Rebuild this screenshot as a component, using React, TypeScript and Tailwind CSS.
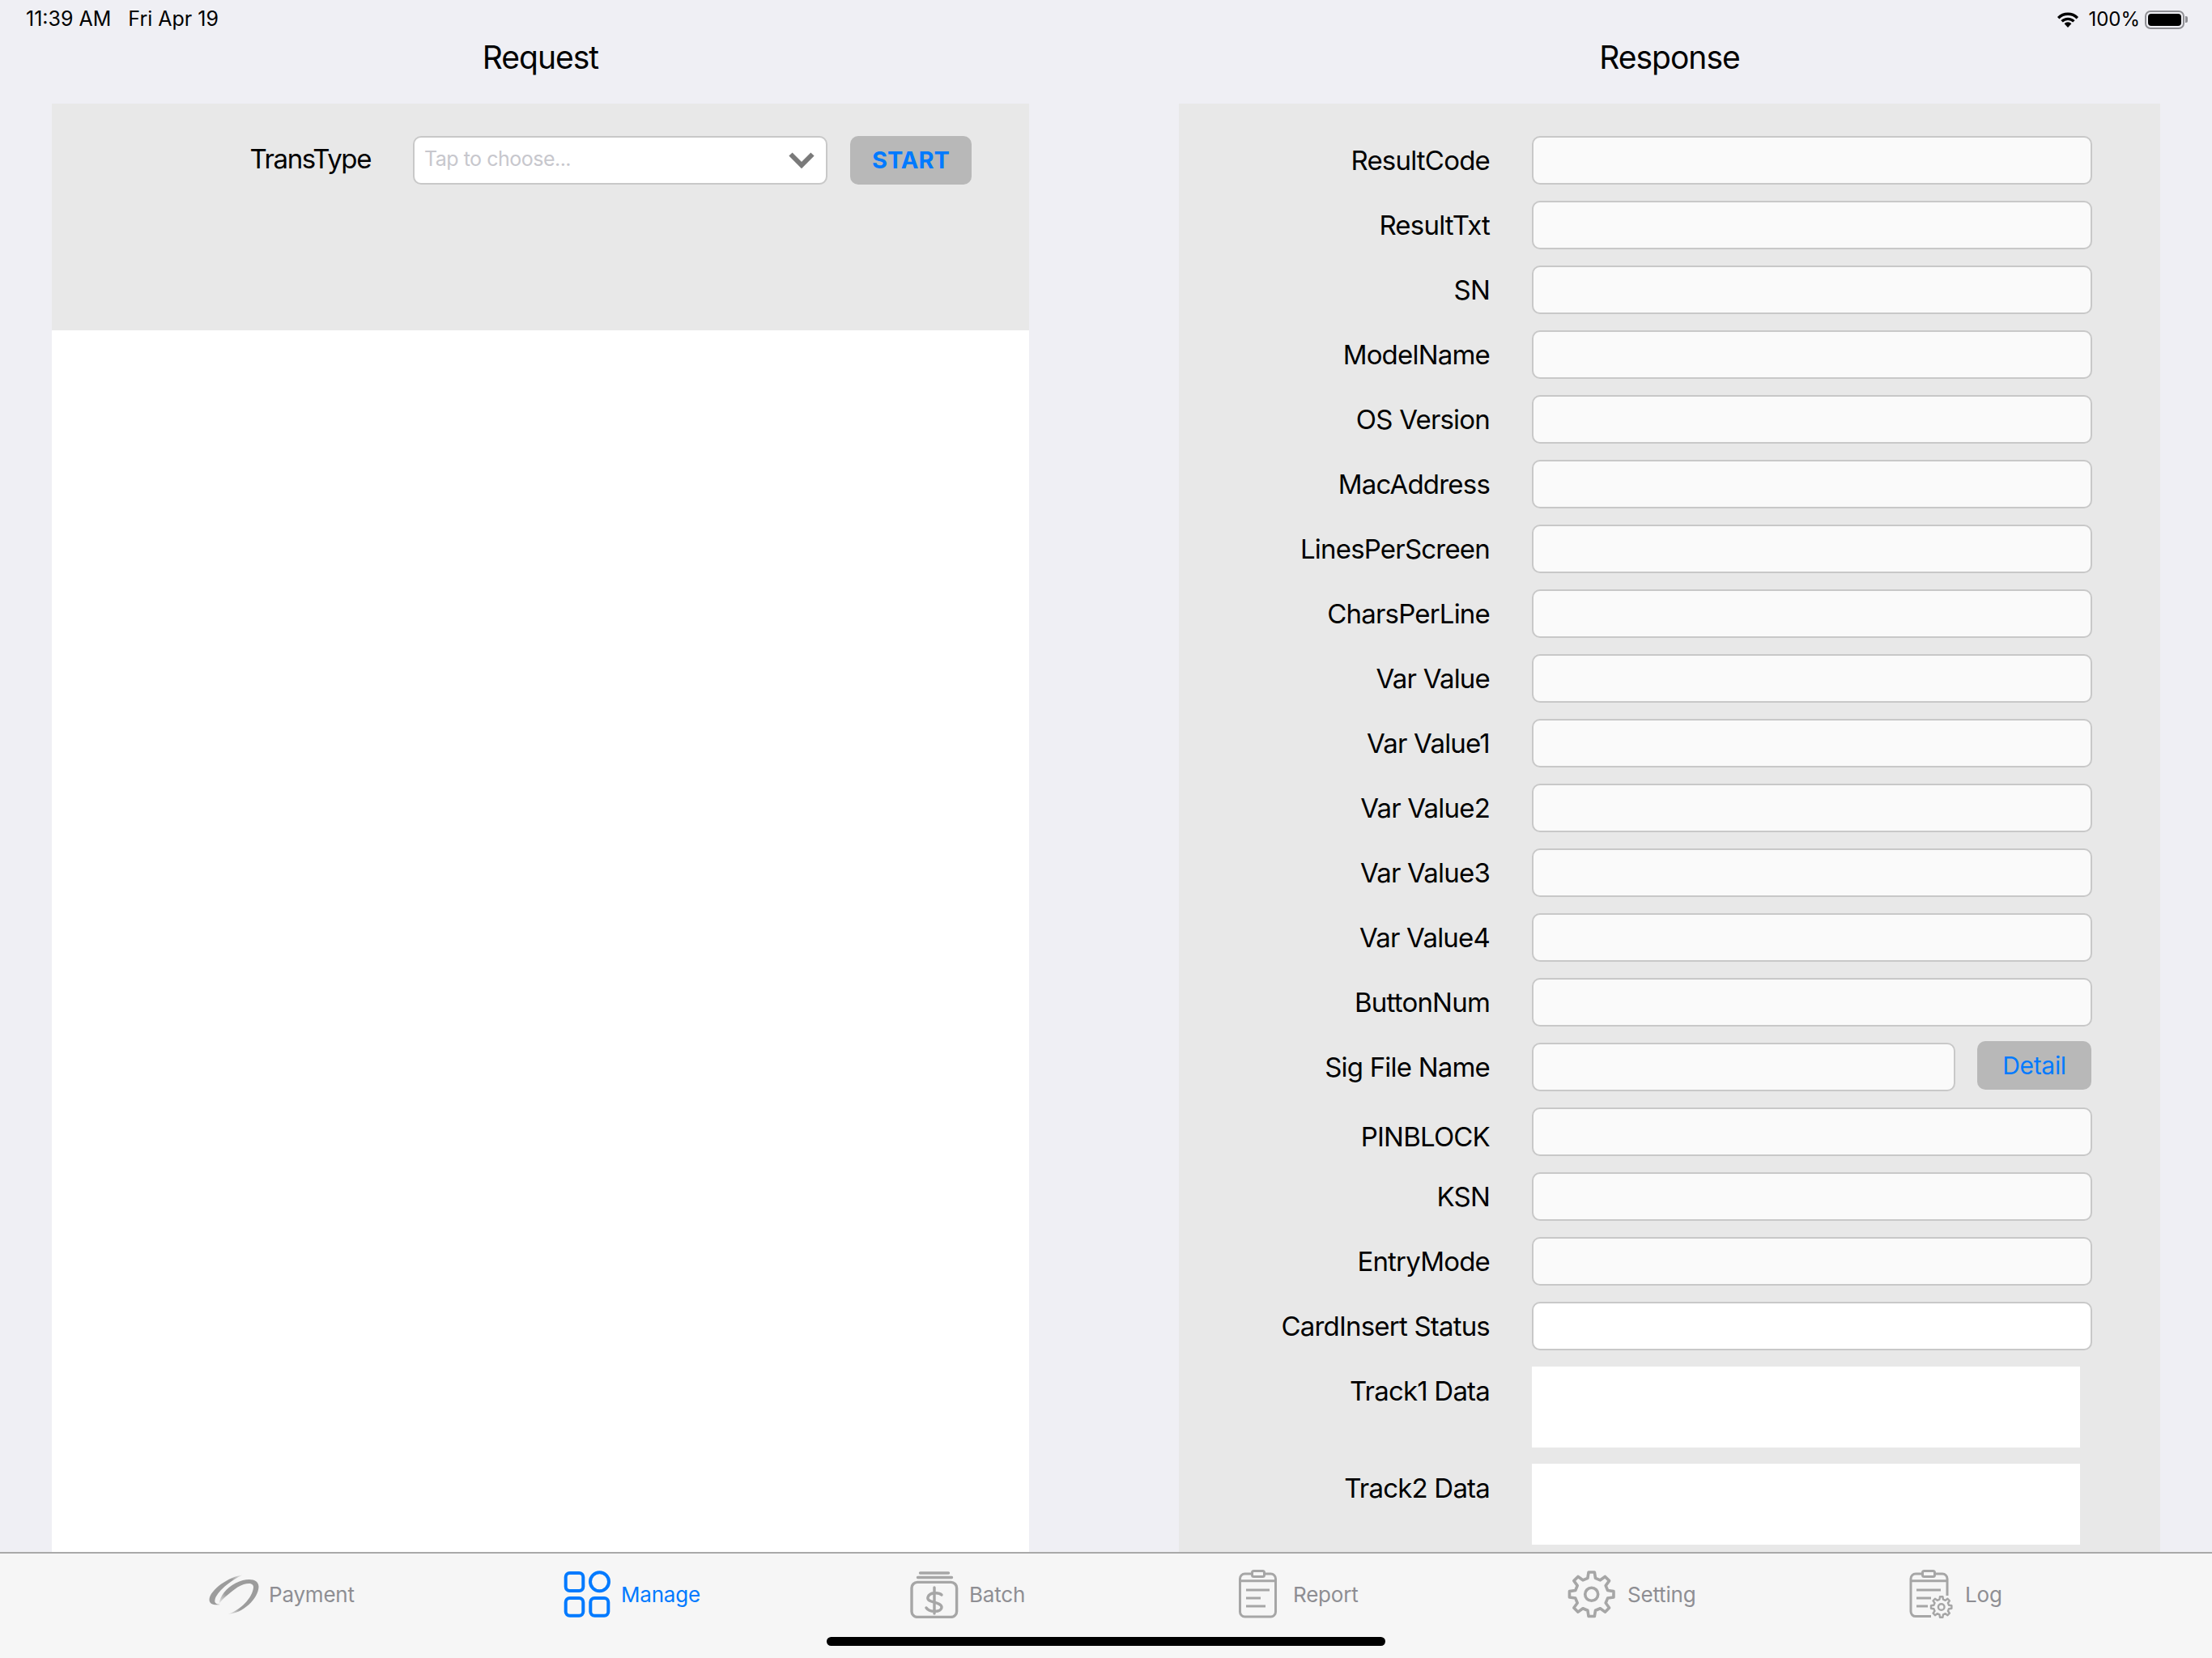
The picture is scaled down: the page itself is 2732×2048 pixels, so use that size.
import React from "react";

const font = "font-['Inter','Liberation_Sans',sans-serif]";

const fields = [
  "ResultCode",
  "ResultTxt",
  "SN",
  "ModelName",
  "OS Version",
  "MacAddress",
  "LinesPerScreen",
  "CharsPerLine",
  "Var Value",
  "Var Value1",
  "Var Value2",
  "Var Value3",
  "Var Value4",
  "ButtonNum",
];

// points of a gear outline, teeth pointing up first
const gearPath = (cx: number, cy: number, outer: number, inner: number, teeth: number) => {
  const pts: string[] = [];
  const step = (Math.PI * 2) / teeth;
  for (let i = 0; i < teeth; i++) {
    const a = -Math.PI / 2 + i * step;
    const corners: [number, number][] = [
      [a - step * 0.3, inner],
      [a - step * 0.17, outer],
      [a + step * 0.17, outer],
      [a + step * 0.3, inner],
    ];
    corners.forEach(([t, r]) => {
      pts.push(`${(cx + Math.cos(t) * r).toFixed(2)} ${(cy + Math.sin(t) * r).toFixed(2)}`);
    });
  }
  return "M" + pts.join(" L") + " Z";
};

const PaymentIcon = () => (
  <svg width="62" height="52" viewBox="8 12 62 52" fill="none">
    <defs>
      <linearGradient id="ringA" gradientUnits="userSpaceOnUse" x1="50" y1="14" x2="10" y2="43">
        <stop offset="0" stopColor="#9c9c9c" stopOpacity="0.05" />
        <stop offset="0.3" stopColor="#9c9c9c" />
        <stop offset="1" stopColor="#9c9c9c" />
      </linearGradient>
      <linearGradient id="ringB" gradientUnits="userSpaceOnUse" x1="38" y1="48" x2="27" y2="58">
        <stop offset="0" stopColor="#9c9c9c" />
        <stop offset="1" stopColor="#9c9c9c" stopOpacity="0.1" />
      </linearGradient>
    </defs>
    <path
      d="M50 14.5C33 16 9 33 8.5 45C8.5 51 15 52 22 51C17 50.5 14.5 49 15.5 45C17.5 36 34 21 50 14.5Z"
      fill="url(#ringA)"
    />
    <path
      d="M31 63C50 62 69 44 69.5 29C69.5 19 56 17 41 24.5C29 31 22 40 20.5 50C25 44 33 37 43.5 29.5C55 23 63.5 24 63 30C61.5 43 47 58 31 63Z"
      fill="url(#ringB)"
    />
  </svg>
);

const ManageIcon = () => (
  <svg width="58" height="58" viewBox="6 9 58 58" fill="none" stroke="#007aff" strokeWidth="4">
    <rect x="8.7" y="12" width="21.6" height="22" rx="5" />
    <circle cx="50.5" cy="22.7" r="11.5" />
    <rect x="8.7" y="43" width="21.6" height="21.7" rx="5" />
    <rect x="39.3" y="43" width="22" height="21.7" rx="5" />
  </svg>
);

const BatchIcon = () => (
  <svg width="60" height="59" viewBox="9 8 60 59" fill="none" stroke="#a6a6a6" strokeWidth="3.4">
    <path d="M21.5 11H56.5M18.5 16.5H60.5" strokeLinecap="round" />
    <rect x="11" y="22.4" width="55.6" height="43" rx="7" />
    <path d="M48 38C45 35 33 34 31 41C29 48 47 46 48 53C48 60 33 60 29 54M39 29V61" strokeLinecap="round" />
  </svg>
);

const ReportIcon = () => (
  <svg width="47" height="60" viewBox="15 9 47 60" fill="none" stroke="#a6a6a6" strokeWidth="3">
    <rect x="16.5" y="14" width="44" height="53" rx="6" />
    <path d="M16.5 22.7H60.5" />
    <rect x="31.5" y="10.5" width="15" height="7" rx="2" fill="#f6f6f6" />
    <path d="M24 34H53M24 44H42M24 54H48" />
  </svg>
);

const SettingIcon = () => (
  <svg width="60" height="60" viewBox="12 8 60 60" fill="none" stroke="#a6a6a6" strokeWidth="3.6" strokeLinejoin="round">
    <path d={gearPath(41.7, 38.3, 27.5, 20.5, 8)} />
    <circle cx="41.7" cy="38.3" r="8" />
  </svg>
);

const LogIcon = () => (
  <svg width="54" height="60" viewBox="13 9 54 60" fill="none" stroke="#a6a6a6" strokeWidth="3">
    <path d="M40 66.6H21A6 6 0 0 1 15 60.6V20A6 6 0 0 1 21 14H54A6 6 0 0 1 60 20V41" />
    <path d="M15 22.7H60" />
    <rect x="29.5" y="10.5" width="15" height="7" rx="2" fill="#f6f6f6" />
    <path d="M22 34H52M22 44H40M22 54H36" />
    <path d={gearPath(52.7, 55, 12.8, 9.6, 8)} strokeWidth="2.4" strokeLinejoin="round" fill="#f6f6f6" />
    <circle cx="52.7" cy="55" r="3.8" strokeWidth="2.4" />
  </svg>
);

const Field = ({ label, white }: { label: string; white?: boolean }) => (
  <div className="flex h-[60px] items-center">
    <label className="w-[384px] pt-[2px] text-right text-[33px] tracking-[-0.8px] text-black">{label}</label>
    <input
      readOnly
      className={`ml-[52px] h-[60px] w-[692px] rounded-[10px] border-2 border-[#c8c8c8] ${white ? "bg-white" : "bg-[#fafafa]"}`}
    />
  </div>
);

const TrackField = ({ label }: { label: string }) => (
  <div className="flex items-start">
    <label className="flex h-[60px] w-[384px] items-center justify-end pt-[2px] text-[33px] tracking-[-0.8px] text-black">{label}</label>
    <div className="ml-[52px] h-[100px] w-[677px] bg-white" />
  </div>
);

const Tab = ({
  icon,
  label,
  className,
  labelWidth,
  active,
}: {
  icon: React.ReactNode;
  label: string;
  className: string;
  labelWidth: string;
  active?: boolean;
}) => (
  <div className={`flex h-[60px] items-center ${className}`}>
    {icon}
    <span className={`whitespace-nowrap text-[26px] tracking-[-0.2px] ${labelWidth} ${active ? "text-[#007aff]" : "text-[#8e8e93]"}`}>
      {label}
    </span>
  </div>
);

export default function App() {
  return (
    <div className={`relative flex h-[2048px] w-[2732px] flex-col overflow-hidden bg-[#efeff4] ${font}`}>
      {/* status bar */}
      <div className="flex h-[48px] items-center justify-between pl-[32px] pr-[30px] text-black">
        <div className="flex gap-[21px] text-[25px]">
          <span>11:39 AM</span>
          <span>Fri Apr 19</span>
        </div>
        <div className="flex items-center text-[24px]">
          <svg width="28" height="20" viewBox="0 0 28 20" fill="none" stroke="#000" strokeWidth="3.4">
            <path d="M2.2 8.2A16.5 16.5 0 0 1 25.8 8.2" />
            <path d="M6.6 12.4A10.5 10.5 0 0 1 21.4 12.4" />
            <path d="M14 20L9.6 15.2A6 6 0 0 1 18.4 15.2Z" fill="#000" stroke="none" />
          </svg>
          <span className="ml-[11px]">100%</span>
          <div className="ml-[6px] h-[23px] w-[49px] rounded-[7px] border-2 border-[#8e8e93] p-[2px]">
            <div className="h-full w-full rounded-[4px] bg-black" />
          </div>
          <div className="ml-[1px] h-[8px] w-[3px] rounded-r-[2px] bg-[#8e8e93]" />
        </div>
      </div>

      <div className="flex min-h-0 flex-1">
        {/* request */}
        <div className="ml-[64px] flex w-[1207px] flex-col">
          <h1 className="flex h-[44px] items-center justify-center pt-[2px] text-[39px] font-normal tracking-[-1px] text-black">Request</h1>
          <div className="mt-[36px] flex flex-1 flex-col bg-white">
            <div className="flex h-[280px] items-start bg-[#e8e8e8] pt-[40px]">
              <label className="flex h-[60px] w-[394px] items-center justify-end pb-[3px] text-[33px] tracking-[-1.4px] text-black">
                TransType
              </label>
              <div className="ml-[52px] flex h-[60px] w-[512px] items-center justify-between rounded-[10px] border-2 border-[#c8c8c8] bg-white pb-[2px] pl-[12px] pr-[14px]">
                <span className="text-[25px] tracking-[-0.5px] text-[#c7c7cd]">Tap to choose...</span>
                <svg width="32" height="21" viewBox="0 0 32 21" fill="none" stroke="#7a7a7a" strokeWidth="6">
                  <path d="M2.5 3.5L16 17L29.5 3.5" />
                </svg>
              </div>
              <button className="ml-[28px] h-[60px] w-[150px] rounded-[10px] bg-[#b8b8b8] text-[29px] font-bold text-[#007aff]">
                START
              </button>
            </div>
          </div>
        </div>

        {/* response */}
        <div className="ml-[185px] flex w-[1212px] flex-col">
          <h1 className="flex h-[44px] items-center justify-center pt-[2px] text-[39px] font-normal tracking-[-1px] text-black">Response</h1>
          <div className="mt-[36px] flex min-h-0 flex-1 flex-col gap-[20px] overflow-hidden bg-[#e8e8e8] pt-[40px]">
            {fields.map((f) => (
              <Field key={f} label={f} />
            ))}
            <div className="flex h-[60px] items-center">
              <label className="w-[384px] pt-[2px] text-right text-[33px] tracking-[-0.8px] text-black">Sig File Name</label>
              <input readOnly className="ml-[52px] h-[60px] w-[523px] rounded-[10px] border-2 border-[#c8c8c8] bg-[#fafafa]" />
              <button className="mb-[4px] ml-[27px] h-[60px] w-[141px] rounded-[10px] bg-[#b8b8b8] text-[30px] tracking-[-0.3px] text-[#007aff]">
                Detail
              </button>
            </div>
            <div className="flex h-[60px] items-center">
              <label className="w-[384px] pt-[14px] text-right text-[33px] tracking-[-0.8px] text-black">PINBLOCK</label>
              <input readOnly className="ml-[52px] h-[60px] w-[692px] rounded-[10px] border-2 border-[#c8c8c8] bg-[#fafafa]" />
            </div>
            <Field label="KSN" />
            <Field label="EntryMode" />
            <Field label="CardInsert Status" white />
            <TrackField label="Track1 Data" />
            <TrackField label="Track2 Data" />
          </div>
        </div>
      </div>

      {/* tab bar */}
      <div className="flex h-[131px] items-start border-t-2 border-[#a9a9a9] bg-[#f6f6f6] pl-[258px] pt-[20px]">
        <Tab icon={<PaymentIcon />} label="Payment" labelWidth="w-[103px]" className="gap-[12px]" />
        <Tab icon={<ManageIcon />} label="Manage" labelWidth="w-[95px]" className="ml-[261px] gap-[13px]" active />
        <Tab icon={<BatchIcon />} label="Batch" labelWidth="w-[68px]" className="ml-[262px] gap-[13px]" />
        <Tab icon={<ReportIcon />} label="Report" labelWidth="w-[80px]" className="ml-[265px] gap-[20px]" />
        <Tab icon={<SettingIcon />} label="Setting" labelWidth="w-[84px]" className="ml-[259px] gap-[14px]" />
        <Tab icon={<LogIcon />} label="Log" labelWidth="w-[44px]" className="ml-[264px] gap-[15px]" />
      </div>

      {/* home indicator */}
      <div className="absolute bottom-[15px] left-[1021px] h-[11px] w-[690px] rounded-full bg-black" />
    </div>
  );
}
